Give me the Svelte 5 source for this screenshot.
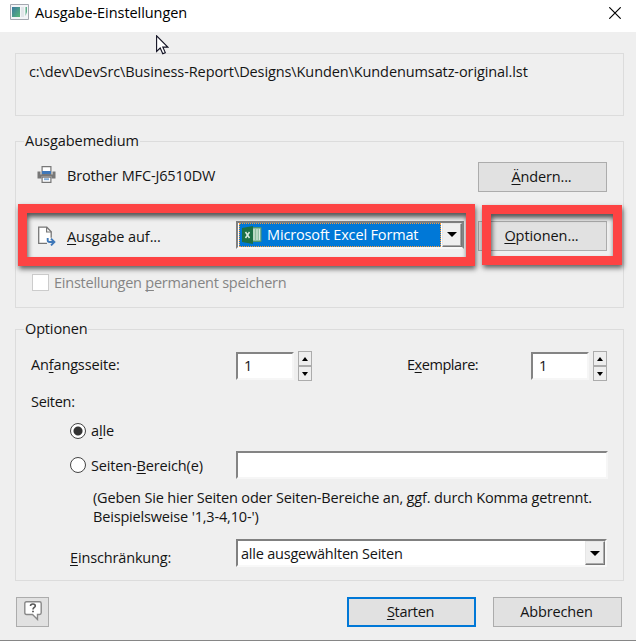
<script lang="ts">
    let pages = $state("all");
    let range = $state("");
    let firstPage = $state("1");
    let copies = $state("1");

    const file = "c:\\dev\\DevSrc\\Business-Report\\Designs\\Kunden\\Kundenumsatz-original.lst";
</script>

{#snippet spinner()}
    <span class="spinner">
        <button aria-label="Mehr"><svg width="6" height="4"><path d="M0 4 3 0 6 4z" /></svg></button>
        <button aria-label="Weniger"><svg width="6" height="4"><path d="M0 0h6L3 4z" /></svg></button>
    </span>
{/snippet}

{#snippet dropArrow()}
    <span class="drop"><svg width="10" height="5"><path d="M0 0h10L5 5z" /></svg></span>
{/snippet}

<div class="dialog">
    <header>
        <svg class="app-icon" width="19" height="16" viewBox="0 0 19 16">
            <defs>
                <linearGradient id="screen" x1="0" y1="0" x2="1" y2="1">
                    <stop offset="0" stop-color="#3c78a0" />
                    <stop offset="1" stop-color="#58b878" />
                </linearGradient>
            </defs>
            <path d="M.5.5h18v15H.5z" fill="#f4f5f8" stroke="#a4a8b0" />
            <path d="M2 3h8v10H2z" fill="url(#screen)" />
            <path d="M11 3h3v10h-3z" fill="#e2e6ea" />
            <path d="M15.5 3h1.5v5l-1.5 4z" fill="#5cae88" />
        </svg>
        <h1>Ausgabe-Einstellungen</h1>
        <button class="close" aria-label="Schließen">
            <svg width="12" height="12" viewBox="0 0 12 12"><path d="M.3.3l11.4 11.4M11.7.3.3 11.7" stroke="#000" stroke-width="1.15" /></svg>
        </button>
    </header>

    <main>
        <section class="group path"><span class="filename">{file}</span></section>

        <section class="group medium">
            <h2>Ausgabemedium</h2>
            <div class="row printer">
                <svg class="icon" width="18" height="17" viewBox="0 0 18 17">
                    <path d="M0 5.500h3v3h12v-3h3v7h-4v-2H4v2H0z" fill="#777" />
                    <path d="M4.600.6h8.800v7.800H4.600z" fill="#fff" stroke="#777" stroke-width="1.200" />
                    <path d="M4.500 5h9v3h-9z" fill="#3f78b9" />
                    <path d="M4.600 11.100h8.800v5.200H4.600z" fill="#fff" stroke="#777" stroke-width="1.200" />
                    <path d="M6.500 12.200h5v2h-5z" fill="#86afd8" />
                </svg>
                <span class="caption">Brother MFC-J6510DW</span>
                <button class="btn"><span><u>Ä</u>ndern...</span></button>
            </div>
            <div class="row target">
                <svg class="icon" width="19" height="20" viewBox="0 0 19 20">
                    <path d="M10 17.300H1.700V1.200h8.100l4.400 4.500v6" fill="#fff" stroke="#777" stroke-width="1.300" />
                    <path d="M9.600 1v5h4.800" fill="none" stroke="#777" stroke-width="1.200" />
                    <path d="M10.700 12v2.200q0 1.800 2 1.800h4.400M14 12.600l3.400 3.400-3.400 3.400" fill="none" stroke="#3f78b9" stroke-width="1.900" />
                </svg>
                <span class="caption"><u>A</u>usgabe auf...</span>
                <div class="combo format">
                    <span class="selection">
                        <svg width="20" height="18" viewBox="0 0 20 18">
                            <path d="M10 1.500h9v14h-9z" fill="#8dbd9f" stroke="#4f9670" />
                            <path d="M12 3v11M15 3v11M17.500 3v11" stroke="#d9ebdd" stroke-width="1.200" />
                            <path d="M0 2 11 0v18L0 16z" fill="#1d7044" />
                            <path d="M3.500 6l4 6M7.500 6l-4 6" stroke="#d9ebe0" stroke-width="1.500" />
                        </svg>
                        <span>Microsoft Excel Format</span>
                    </span>
                    {@render dropArrow()}
                </div>
                <button class="btn wide"><span><u>O</u>ptionen...</span></button>
            </div>
            <div class="row permanent">
                <span class="checkbox"></span>
                <span>Einstellungen <u>p</u>ermanent speichern</span>
            </div>
        </section>

        <section class="group options">
            <h2>Optionen</h2>
            <div class="row numbers">
                <span class="first">An<u>f</u>angsseite:</span>
                <input class="number" bind:value={firstPage} aria-label="Anfangsseite" />
                {@render spinner()}
                <span class="copies">E<u>x</u>emplare:</span>
                <input class="number" bind:value={copies} aria-label="Exemplare" />
                {@render spinner()}
            </div>
            <div class="row pages">Seiten:</div>
            <label class="row choice all">
                <input type="radio" name="pages" value="all" bind:group={pages} />
                <span>a<u>l</u>le</span>
            </label>
            <div class="row range">
                <label class="choice">
                    <input type="radio" name="pages" value="range" bind:group={pages} />
                    <span>Seiten-<u>B</u>ereich(e)</span>
                </label>
                <input class="text" bind:value={range} aria-label="Seiten-Bereich" />
            </div>
            <p>
                (Geben Sie hier Seiten oder Seiten-Bereiche an, ggf. durch Komma getrennt.<br />
                Beispielsweise '1,3-4,10-')
            </p>
            <div class="row limit">
                <span class="limit-label"><u>E</u>inschränkung:</span>
                <div class="combo">
                    <span class="value">alle ausgewählten Seiten</span>
                    {@render dropArrow()}
                </div>
            </div>
        </section>
    </main>

    <footer>
        <button class="btn help" aria-label="Hilfe">
            <svg width="18" height="20" viewBox="0 0 18 20">
                <path d="M2.500.8h13q1.700 0 1.700 1.700v9.300q0 1.700-1.700 1.700h-2v5l-5-5h-6Q.8 13.500.8 11.800V2.500Q.8.8 2.500.8z" fill="#fff" stroke="#888" stroke-width="1.400" />
                <path d="M6.500 5q0-2 2.400-2t2.400 1.900c0 1.500-2.300 1.600-2.300 3.600" fill="none" stroke="#555" stroke-width="1.600" />
                <path d="M8.100 9.700h1.800v1.600H8.100z" fill="#555" />
            </svg>
        </button>
        <button class="btn primary"><span><u>S</u>tarten</span></button>
        <button class="btn"><span>Abbrechen</span></button>
    </footer>

    <div class="marker marker-format"></div>
    <div class="marker marker-options"></div>
    <svg class="cursor" width="13" height="20" viewBox="0 0 13 20">
        <path d="M.6.8v15.600l3.600-3.400 2.600 5.700 2.500-1.100-2.500-5.500h5z" fill="#fff" stroke="#111122" stroke-width="1.100" />
    </svg>
</div>

<style>
    :global(body) {
        margin: 0;
        overflow: hidden;
    }

    .dialog {
        position: relative;
        display: flex;
        flex-direction: column;
        box-sizing: border-box;
        width: 636px;
        height: 641px;
        background: #efefef;
        border-bottom: 1px solid #868686;
        color: #141414;
        font: 14.5px/19px "Open Sans", "Noto Sans", sans-serif;
        letter-spacing: -0.15px;
        white-space: nowrap;
    }

    button,
    input {
        box-sizing: border-box;
        margin: 0;
        padding: 0;
        color: inherit;
        font: inherit;
        letter-spacing: inherit;
    }

    u {
        text-decoration-thickness: 1px;
        text-decoration-skip-ink: none;
        text-underline-offset: 2px;
    }

    header {
        display: flex;
        height: 32px;
        background: #fff;
    }

    .app-icon {
        margin: 4px 6px 0 10px;
    }

    h1,
    h2,
    p {
        margin: 0;
        font: inherit;
    }

    h1 {
        margin-top: 3px;
        color: #000;
        letter-spacing: -0.06px;
    }

    .close {
        display: flex;
        margin: 7px 15px 0 auto;
        width: 12px;
        height: 12px;
        border: 0;
        background: none;
    }

    main {
        padding: 21px 12px 0 15px;
    }

    .group {
        box-sizing: border-box;
        border: 1px solid #dcdcdc;
    }

    .path {
        height: 63px;
        padding: 8px 13px;
        letter-spacing: -0.1px;
    }

    .medium {
        height: 167px;
        margin-top: 25px;
    }

    .options {
        height: 252px;
        margin-top: 21px;
    }

    h2 {
        width: max-content;
        height: 19px;
        margin: -11px 0 0 8px;
        padding: 0 1px;
        background: #efefef;
    }

    .medium h2 {
        letter-spacing: -0.03px;
    }

    .row {
        display: flex;
        align-items: center;
    }

    .btn {
        display: flex;
        align-items: center;
        justify-content: center;
        flex: none;
        width: 129px;
        height: 30px;
        padding: 0 2px 2px 0;
        border: 1px solid #acacac;
        background: #e1e1e1;
    }

    .wide {
        letter-spacing: -0.08px;
    }

    .printer,
    .target {
        height: 30px;
        padding: 0 15px 0 21px;
    }

    .printer {
        margin-top: 12px;
    }

    .target {
        margin-top: 29px;
    }

    .icon {
        flex: none;
        width: 19px;
        margin-right: 11px;
    }

    .printer .icon {
        margin-top: -5px;
    }

    .printer .caption {
        width: 411px;
        margin-top: -4px;
    }

    .target .caption {
        width: 169px;
        letter-spacing: -0.08px;
    }

    .combo {
        display: flex;
        box-sizing: border-box;
        width: 371px;
        height: 28px;
        border: 2px solid;
        border-color: #808080 #f8f8f8 #f8f8f8 #808080;
        background: #fff;
    }

    .format {
        width: 228px;
        margin: -3px 14px 0 0;
        border-right-color: #888;
    }

    .selection {
        display: flex;
        align-items: center;
        box-sizing: border-box;
        width: 202px;
        height: 24px;
        margin: 0 1px;
        padding-left: 2px;
        gap: 5px;
        border: 1px dotted #ff9a36;
        background: #0078d7;
        color: #fff;
    }

    .drop {
        display: flex;
        flex: none;
        align-items: center;
        justify-content: center;
        box-sizing: border-box;
        width: 20px;
        height: 24px;
        margin-left: auto;
        border: 1px solid;
        border-color: #e6e6e6 #777 #777 #e6e6e6;
        box-shadow: inset -1px -1px #aaa;
        background: #efefef;
    }

    .permanent {
        margin-top: 22px;
        padding-left: 16px;
        gap: 5px;
        color: #858585;
        letter-spacing: -0.24px;
    }

    .checkbox {
        box-sizing: border-box;
        width: 17px;
        height: 17px;
        border: 1px solid #ccc;
        background: #fff;
    }

    .numbers {
        height: 30px;
        margin-top: 13px;
        padding-left: 15px;
    }

    .first {
        width: 205px;
        margin-top: -4px;
    }

    .copies {
        width: 124px;
        margin: -4px 0 0 95px;
        letter-spacing: -0.45px;
    }

    .number,
    .text {
        height: 28px;
        border: 2px solid;
        border-color: #848484 #f6f6f6 #f6f6f6 #848484;
        background: #fff;
        outline: none;
    }

    .number {
        width: 58px;
        margin-right: 4px;
        padding: 0 0 2px 6px;
    }

    .spinner {
        display: flex;
        flex-direction: column;
        width: 14px;
        height: 30px;
    }

    .spinner button {
        display: flex;
        flex: 1;
        align-items: center;
        justify-content: center;
        border: 1px solid #acacac;
        background: #eee;
    }

    .pages {
        height: 19px;
        margin-top: 11px;
        padding-left: 15px;
        letter-spacing: -0.3px;
    }

    .choice {
        display: flex;
        align-items: center;
        gap: 5px;
        height: 19px;
    }

    .all {
        margin-top: 10px;
        padding-left: 54px;
    }

    input[type="radio"] {
        appearance: none;
        width: 16px;
        height: 16px;
        border: 1px solid #444;
        border-radius: 50%;
        background: #fff;
    }

    input[type="radio"]:checked {
        background: radial-gradient(circle, #333 4px, #fff 5px);
    }

    .range {
        height: 28px;
        margin-top: 11px;
        padding-left: 54px;
    }

    .range .choice {
        width: 166px;
    }

    .text {
        width: 372px;
    }

    p {
        margin: 9px 0 0 77px;
        letter-spacing: -0.17px;
    }

    .limit {
        height: 28px;
        margin-top: 13px;
        padding-left: 54px;
    }

    .limit-label {
        width: 166px;
        padding-top: 8px;
    }

    .value {
        padding: 3px 0 0 3px;
        letter-spacing: -0.22px;
    }

    footer {
        display: flex;
        gap: 17px;
        margin-top: 16px;
        padding: 0 14px 0 16px;
    }

    .help {
        width: 33px;
        margin-right: auto;
        padding-right: 0;
    }

    .primary {
        border: 2px solid #0078d7;
        letter-spacing: -0.3px;
    }

    .marker {
        position: absolute;
        box-sizing: border-box;
        border: 9px solid #fd4343;
        box-shadow: 1px 3px 5px rgba(0, 0, 0, 0.6), inset 1px 4px 5px rgba(0, 0, 0, 0.65);
        pointer-events: none;
    }

    .marker-format {
        left: 18px;
        top: 204px;
        width: 457px;
        height: 62px;
    }

    .marker-options {
        left: 482px;
        top: 205px;
        width: 140px;
        height: 60px;
    }

    .cursor {
        position: absolute;
        left: 156px;
        top: 35px;
    }
</style>
